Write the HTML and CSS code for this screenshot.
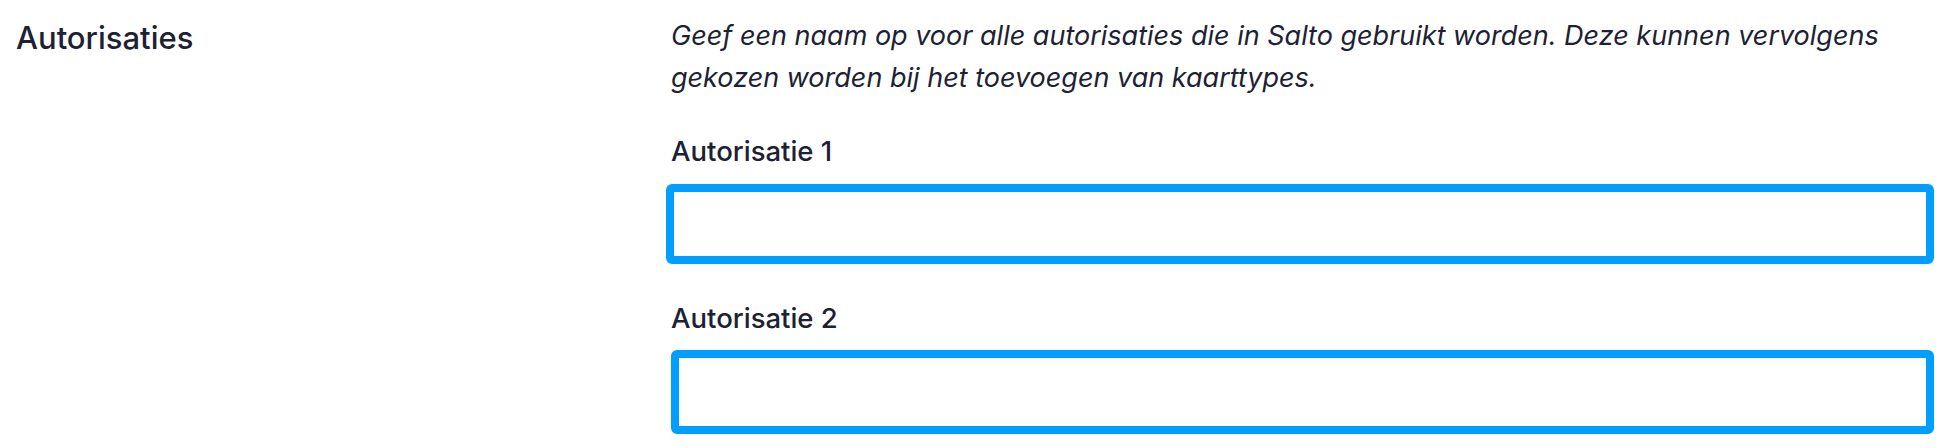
FILE: index.html
```html
<!DOCTYPE html>
<html lang="nl">
<head>
<meta charset="utf-8">
<title>Autorisaties</title>
<link rel="stylesheet" href="styles.css">
</head>
<body>
<div class="settings-row">
  <div class="row-title">Autorisaties</div>
  <div class="row-body">
    <p class="description">Geef een naam op voor alle autorisaties die in Salto gebruikt worden. Deze kunnen vervolgens gekozen worden bij het toevoegen van kaarttypes.</p>
    <label class="field-label field-label-first" for="auth1">Autorisatie 1</label>
    <input class="field-input field-input-first" id="auth1" type="text">
    <label class="field-label field-label-second" for="auth2">Autorisatie 2</label>
    <input class="field-input field-input-second" id="auth2" type="text">
  </div>
</div>
</body>
</html>
```
FILE: styles.css
```css
html, body {
  margin: 0;
  padding: 0;
  background: #ffffff;
}
body {
  font-family: Inter, "Noto Sans", sans-serif;
  color: #1c2133;
}
.settings-row {
  display: grid;
  grid-template-columns: 655px 1fr;
  padding: 0 6px 0 16px;
}
.row-title {
  font-size: 31px;
  font-weight: 500;
  line-height: 41px;
  margin-top: 17px;
}
.row-body {
  display: flex;
  flex-direction: column;
  align-items: stretch;
}
.description {
  margin: 15px 0 0 0;
  font-size: 27px;
  line-height: 42px;
  font-style: italic;
  max-width: 1260px;
}
.field-label {
  display: block;
  font-size: 27.5px;
  font-weight: 500;
  line-height: 36px;
}
.field-label-first {
  margin-top: 34px;
}
.field-label-second {
  margin-top: 36px;
}
.field-input {
  display: block;
  box-sizing: border-box;
  border: 8px solid #009fff;
  border-radius: 6px;
  background: #ffffff;
  outline: none;
  margin: 0;
  padding: 0 12px;
  font: inherit;
}
.field-input-first {
  margin-top: 15px;
  margin-left: -5px;
  height: 80px;
}
.field-input-second {
  margin-top: 14px;
  height: 84px;
}
```
